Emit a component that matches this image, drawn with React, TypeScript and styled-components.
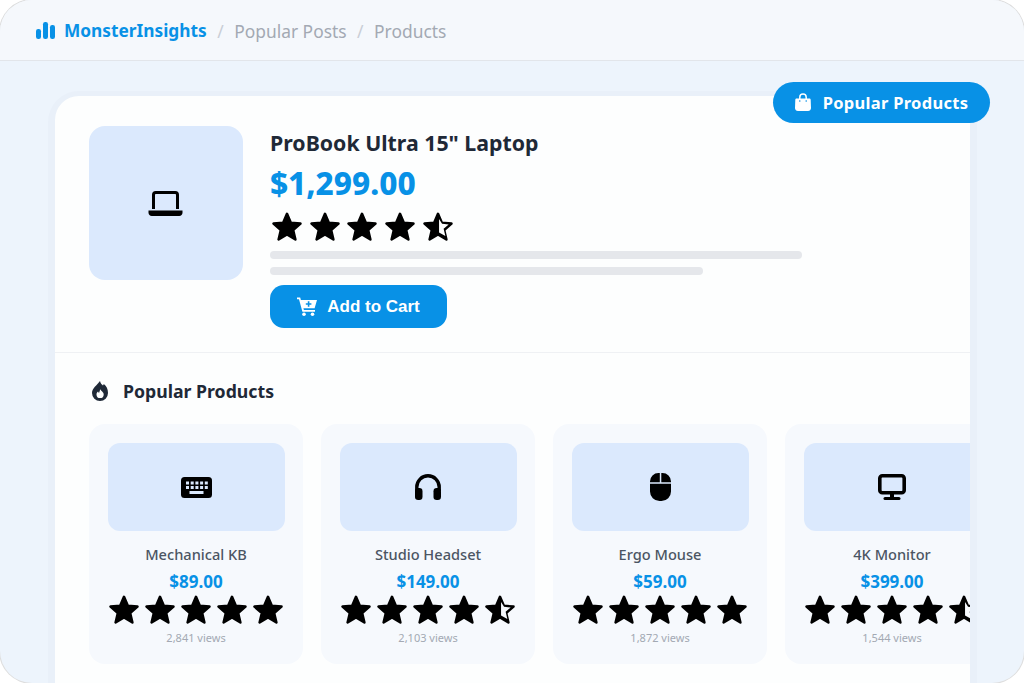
import React from 'react';
import styled, { createGlobalStyle } from 'styled-components';

const Global = createGlobalStyle`
  html, body { margin: 0; padding: 0; background: #fff; }
  #root { width: 1024px; height: 683px; overflow: hidden; }
  * { box-sizing: border-box; }
`;

const Frame = styled.div`
  position: relative;
  width: 1024px;
  height: 683px;
  background: #edf4fc;
  border-radius: 32px;
  box-shadow: 0 0 0 1px #dedede;
  overflow: hidden;
  font-family: "Noto Sans", "Open Sans", sans-serif;
`;
const TopBar = styled.header`
  height: 61px;
  background: #f5f8fc;
  border-bottom: 1px solid #e2e5ea;
  display: flex;
  align-items: center;
  padding: 1px 36px 0;
  gap: 10.5px;
  font-size: 17.4px;
`;
const Brand = styled.div`
  display: flex;
  align-items: center;
  gap: 9px;
  color: #0891e6;
  font-weight: 700;
  font-size: 17.3px;
`;
const Crumb = styled.span`
  color: #a3a9b3;
`;
const Sep = styled.span`
  color: #c9ced6;
`;
const Stage = styled.main`
  padding: 35px 54px 0 55px;
`;
const Card = styled.section`
  width: 915px;
  height: 620px;
  background: #fdfefe;
  border-radius: 24px;
  box-shadow: 0 2px 0 7px #e9f0f9;
  overflow: hidden;
`;
const Hero = styled.div`
  display: flex;
  gap: 27px;
  padding: 30px 34px 24px;
  border-bottom: 1px solid #eff1f4;
  height: 257px;
`;
const HeroImage = styled.div`
  width: 154px;
  height: 154px;
  flex: none;
  border-radius: 16px;
  background: #dbe9fd;
  display: flex;
  align-items: center;
  justify-content: center;
  padding: 2px 2px 0 0;
  color: #000;
`;
const HeroInfo = styled.div`
  flex: 1;
  display: flex;
  flex-direction: column;
  align-items: flex-start;
`;
const Title = styled.h1`
  margin: 0;
  font-size: 21.3px;
  line-height: 34px;
  font-weight: 700;
  color: #1f2937;
`;
const Price = styled.div`
  font-size: 31.5px;
  line-height: 46px;
  font-weight: 800;
  color: #0891e6;
`;
const HeroStars = styled.div`
  display: flex;
  gap: 1.7px;
  height: 36px;
  margin-left: -1px;
  margin-top: 3px;
`;
const Line = styled.div<{ $w: number; $gap: number }>`
  width: ${p => p.$w}px;
  height: 8px;
  border-radius: 4px;
  background: #e5e7eb;
  margin-top: ${p => p.$gap}px;
`;
const CartBtn = styled.button`
  margin-top: 10px;
  width: 177px;
  height: 43px;
  border: 0;
  border-radius: 14px;
  background: #0891e6;
  color: #fff;
  display: flex;
  align-items: center;
  justify-content: center;
  gap: 10px;
  font-family: "Liberation Sans", Arial, sans-serif;
  font-weight: 700;
  font-size: 17px;
  padding: 0;
`;
const Section = styled.div`
  padding: 23px 0 0 34px;
`;
const SectionHead = styled.div`
  display: flex;
  align-items: center;
  gap: 15px;
  height: 30px;
  padding-left: 3px;
  color: #1f2937;
  font-size: 17.7px;
  font-weight: 700;
`;
const Grid = styled.div`
  display: flex;
  gap: 18px;
  margin-top: 18px;
`;
const Product = styled.article`
  width: 214px;
  height: 240px;
  flex: none;
  background: #f6f9fd;
  border-radius: 16px;
  padding: 19px 18px;
  display: flex;
  flex-direction: column;
  align-items: center;
`;
const Thumb = styled.div`
  width: 177px;
  height: 88px;
  flex: none;
  border-radius: 12px;
  background: #dbe9fd;
  display: flex;
  align-items: center;
  justify-content: center;
  color: #000;
`;
const Name = styled.div`
  margin-top: 13px;
  font-size: 14.6px;
  line-height: 20px;
  color: #4b5563;
  font-weight: 500;
`;
const ProdPrice = styled.div`
  margin-top: 7px;
  font-size: 17px;
  line-height: 22px;
  font-weight: 700;
  color: #0891e6;
`;
const ProdStars = styled.div`
  display: flex;
  height: 36px;
  margin-top: -1px;
  white-space: nowrap;
`;
const Views = styled.div`
  font-size: 11px;
  line-height: 16px;
  margin-top: 2px;
  color: #a3a9b3;
`;
const Badge = styled.div`
  position: absolute;
  left: 773px;
  top: 82px;
  width: 217px;
  height: 41px;
  border-radius: 21px;
  background: #0891e6;
  color: #fff;
  display: flex;
  align-items: center;
  justify-content: center;
  gap: 12px;
  font-size: 16.5px;
  font-weight: 700;
  letter-spacing: 0.3px;
`;

const STAR = 'M12 3.2 14.55 9.2 21 9.75 16.1 14 17.6 20.3 12 16.95 6.4 20.3 7.9 14 3 9.75 9.45 9.2Z';
const HOLE = 'M12.7 6.6V15.6L16.9 18 15.75 13.2 19.1 10.3 14.7 9.9Z';

const Star = ({ half, hole }: { half?: boolean; hole: string }) => (
  <svg width="36" height="36" viewBox="0 0 24 24" style={{ flex: 'none' }}>
    <path d={STAR} fill="#000" stroke="#000" strokeWidth="1.7" strokeLinejoin="round" />
    {half && <path d={HOLE} fill={hole} />}
  </svg>
);

const Stars = ({ half, hole }: { half?: boolean; hole: string }) => (
  <>
    <Star hole={hole} /><Star hole={hole} /><Star hole={hole} /><Star hole={hole} />
    <Star half={half} hole={hole} />
  </>
);

const BrandIcon = () => (
  <svg width="19" height="18" viewBox="0 0 19 18" fill="#0891e6">
    <rect x="0" y="7" width="5" height="10" rx="2.2" />
    <rect x="7" y="0" width="5" height="17" rx="2.2" />
    <rect x="14" y="3" width="5" height="14" rx="2.2" />
  </svg>
);

const BagIcon = () => (
  <svg width="16" height="19" viewBox="0 0 16 19" fill="#fff" style={{ flex: 'none' }}>
    <path d="M1.6 5.5h12.8c.7 0 1.2.5 1.3 1.2l.3 8.3c.1 1.7-1.2 3-2.9 3H2.9c-1.7 0-3-1.3-2.9-3l.3-8.3c.1-.7.6-1.2 1.3-1.2Z" />
    <path d="M4.8 7V4.2a3.2 3.2 0 0 1 6.4 0V7" fill="none" stroke="#fff" strokeWidth="1.5" />
    <circle cx="4.8" cy="8" r=".8" fill="#0891e6" />
    <circle cx="11.2" cy="8" r=".8" fill="#0891e6" />
  </svg>
);

const FlameIcon = () => (
  <svg width="16" height="20" viewBox="0 0 16 20" style={{ flex: 'none' }}>
    <path
      fill="#1f2937"
      fillRule="evenodd"
      d="M8 0c.6 2.6 2 3.7 3 4.6.4-.6.6-1 .8-1.6C14.5 5 16 8 16 12a8 8 0 0 1-16 0C0 7 5 4.5 8 0ZM8.5 8.2c-.9 1.3-1 2.7-1.5 3.7-.5-.2-.8-.7-.9-1.3-.9.6-1.6 1.5-1.6 2.8a3.6 3.6 0 0 0 7.2 0c0-2.5-2.9-3.6-3.2-5.2Z"
    />
  </svg>
);

const CartIcon = () => (
  <svg width="20" height="19" viewBox="0 0 20 19" style={{ flex: 'none' }}>
    <path
      fill="#fff"
      fillRule="evenodd"
      d="M0 .5h3.2l.7 2.5H20l-2.4 8.2H6.4l.5 1.8H18v1.7H5.4L2 2.2H0ZM10.8 4.2v2h-2v1.6h2v2h1.6v-2h2V6.2h-2v-2Z"
    />
    <circle cx="7" cy="17.2" r="1.8" fill="#fff" />
    <circle cx="15.5" cy="17.2" r="1.8" fill="#fff" />
  </svg>
);

const LaptopIcon = () => (
  <svg width="35" height="26" viewBox="0 0 35 26" fill="none">
    <path d="M5.5 18V3.8C5.5 2.5 6.5 1.5 7.8 1.5h19.4c1.3 0 2.3 1 2.3 2.3V18" stroke="#000" strokeWidth="3" />
    <path d="M.5 19.5h34v2.3c0 1.8-1.4 3.2-3.2 3.2H3.7C1.9 25 .5 23.6.5 21.8Z" fill="#000" />
  </svg>
);

const KeyboardIcon = () => {
  const keys = [];
  for (let i = 0; i < 5; i++) {
    keys.push(<rect key={`a${i}`} x={5 + i * 4.7} y="4.5" width="3" height="3" />);
    keys.push(<rect key={`b${i}`} x={5 + i * 4.7} y="9" width="3" height="3" />);
  }
  return (
    <svg width="31" height="21" viewBox="0 0 31 21">
      <rect width="31" height="21" rx="3.5" fill="#000" />
      <g fill="#dbe9fd">
        {keys}
        <rect x="8.5" y="14" width="14" height="3" />
      </g>
    </svg>
  );
};

const HeadsetIcon = () => (
  <svg width="26" height="26" viewBox="0 0 26 26">
    <path d="M1.8 17V13a11.2 11.2 0 0 1 22.4 0v4" fill="none" stroke="#000" strokeWidth="3.4" />
    <rect x="0" y="14" width="7.5" height="12" rx="3.2" fill="#000" />
    <rect x="18.5" y="14" width="7.5" height="12" rx="3.2" fill="#000" />
  </svg>
);

const MouseIcon = () => (
  <svg width="21" height="28" viewBox="0 0 21 28">
    <path d="M9.8 0v9.2H0V8.5A8.5 8.5 0 0 1 8.5 0ZM11.3 0h1.2A8.5 8.5 0 0 1 21 8.5v.7h-9.7ZM0 10.7h21V18.5A9.5 9.5 0 0 1 11.5 28h-2A9.5 9.5 0 0 1 0 18.5Z" fill="#000" />
  </svg>
);

const MonitorIcon = () => (
  <svg width="28" height="26" viewBox="0 0 28 26" fill="none">
    <rect x="1.8" y="1.8" width="24.4" height="17" rx="2.5" stroke="#000" strokeWidth="3.6" />
    <rect x="12" y="20" width="4" height="4" fill="#000" />
    <rect x="5.5" y="23" width="17" height="3" rx="1.5" fill="#000" />
  </svg>
);

const products = [
  { name: 'Mechanical KB', price: '$89.00', views: '2,841 views', icon: <KeyboardIcon />, half: false },
  { name: 'Studio Headset', price: '$149.00', views: '2,103 views', icon: <HeadsetIcon />, half: true },
  { name: 'Ergo Mouse', price: '$59.00', views: '1,872 views', icon: <MouseIcon />, half: false },
  { name: '4K Monitor', price: '$399.00', views: '1,544 views', icon: <MonitorIcon />, half: true },
];

export default function App() {
  return (
    <Frame>
      <Global />
      <TopBar>
        <Brand><BrandIcon />MonsterInsights</Brand>
        <Sep>/</Sep>
        <Crumb>Popular Posts</Crumb>
        <Sep>/</Sep>
        <Crumb>Products</Crumb>
      </TopBar>
      <Stage>
        <Card>
          <Hero>
            <HeroImage><LaptopIcon /></HeroImage>
            <HeroInfo>
              <Title>ProBook Ultra 15" Laptop</Title>
              <Price>$1,299.00</Price>
              <HeroStars><Stars half hole="#fdfefe" /></HeroStars>
              <Line $w={532} $gap={6} />
              <Line $w={433} $gap={8} />
              <CartBtn><CartIcon />Add to Cart</CartBtn>
            </HeroInfo>
          </Hero>
          <Section>
            <SectionHead><FlameIcon />Popular Products</SectionHead>
            <Grid>
              {products.map(p => (
                <Product key={p.name}>
                  <Thumb>{p.icon}</Thumb>
                  <Name>{p.name}</Name>
                  <ProdPrice>{p.price}</ProdPrice>
                  <ProdStars><Stars half={p.half} hole="#f6f9fd" /></ProdStars>
                  <Views>{p.views}</Views>
                </Product>
              ))}
            </Grid>
          </Section>
        </Card>
      </Stage>
      <Badge><BagIcon />Popular Products</Badge>
    </Frame>
  );
}
